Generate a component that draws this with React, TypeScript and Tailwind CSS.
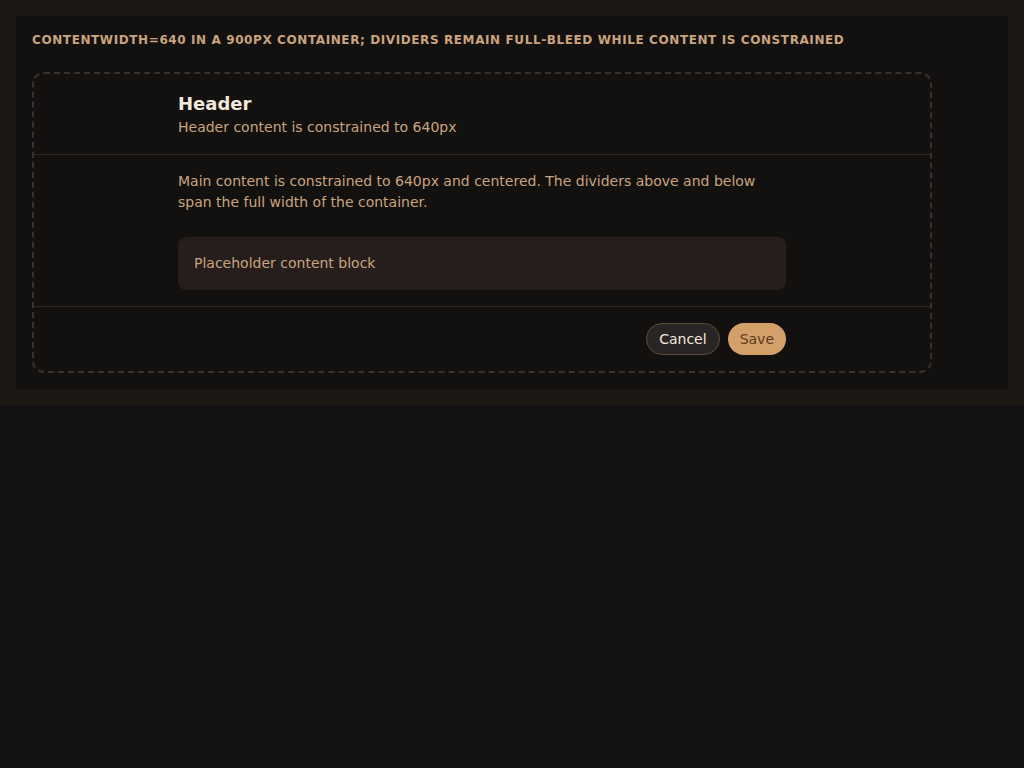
export default function App() {
  return (
    <div className="bg-[#121212] min-h-screen font-['DejaVu_Sans',sans-serif]">
      <div className="bg-[#1c1813] p-4">
        <div className="bg-[#131010] p-4">
          <h2 className="text-xs font-bold uppercase tracking-wider text-[#c9a47e] leading-4">
            contentWidth=640 in a 900px container; dividers remain full-bleed while content is constrained
          </h2>
          <div className="mt-6 w-[900px] rounded-xl border-2 border-dashed border-[#35312e]">
            <div className="border-b border-[#2c2826]">
              <div className="mx-auto w-[640px] px-4 py-4">
                <h3 className="text-lg font-bold leading-[27px] text-[#f2e8dc]">Header</h3>
                <p className="text-sm leading-[21px] text-[#c9a47e]">Header content is constrained to 640px</p>
              </div>
            </div>
            <div className="border-b border-[#2c2826]">
              <div className="mx-auto w-[640px] px-4 py-4">
                <p className="text-sm leading-[21px] text-[#c9a47e]">
                  Main content is constrained to 640px and centered. The dividers above and below span the full width of the container.
                </p>
                <div className="mt-6 rounded-lg bg-[#261e1c] px-4 py-4 text-sm leading-[21px] text-[#c9a47e]">
                  Placeholder content block
                </div>
              </div>
            </div>
            <div>
              <div className="mx-auto flex w-[640px] justify-end gap-2 px-4 py-4">
                <button className="h-8 rounded-full border border-[#5c4a38] bg-[#292524] px-3 text-sm text-[#f2e8dc]">
                  Cancel
                </button>
                <button className="h-8 rounded-full bg-[#d4a06a] px-3 text-sm text-[#5a3c20]">
                  Save
                </button>
              </div>
            </div>
          </div>
        </div>
      </div>
    </div>
  );
}
